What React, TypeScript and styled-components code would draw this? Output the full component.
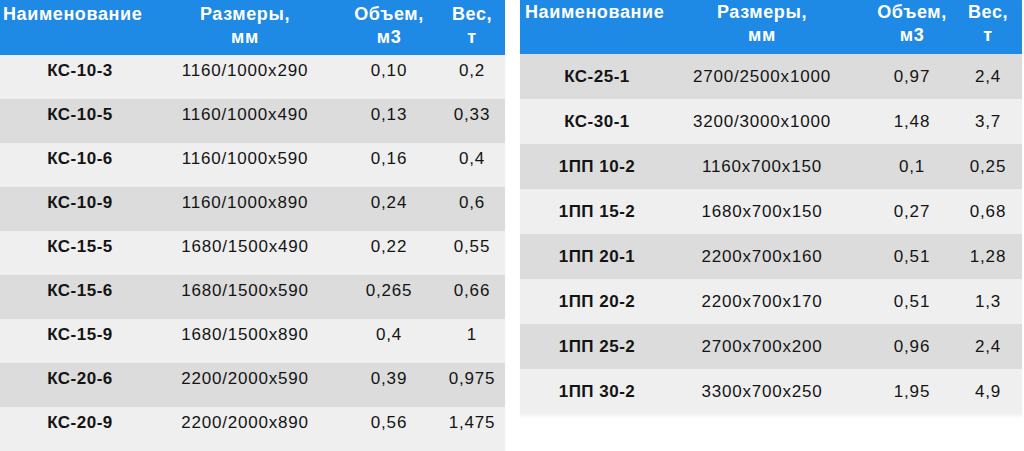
import * as React from 'react';
import styled, { createGlobalStyle } from 'styled-components';

const GlobalStyle = createGlobalStyle`
    html, body {
        margin: 0;
        padding: 0;
        background: #ffffff;
    }
    body {
        font-family: "Liberation Sans", Arial, sans-serif;
        color: #141414;
    }
`;

type Column = { width: number; shift: number };

type TableSpec = {
    width: number;
    headHeight: number;
    headTop: number;
    namePad: number;
    rowHeight: number;
    rowTop: number;
    firstDark: boolean;
    columns: Column[];
    rows: string[][];
};

const leftTable: TableSpec = {
    width: 505,
    headHeight: 55,
    headTop: 3,
    namePad: 3,
    rowHeight: 44,
    rowTop: 5,
    firstDark: false,
    columns: [
        { width: 160, shift: 0 },
        { width: 170, shift: 0 },
        { width: 118, shift: 0 },
        { width: 57, shift: -9 },
    ],
    rows: [
        ['КС-10-3', '1160/1000x290', '0,10', '0,2'],
        ['КС-10-5', '1160/1000x490', '0,13', '0,33'],
        ['КС-10-6', '1160/1000x590', '0,16', '0,4'],
        ['КС-10-9', '1160/1000x890', '0,24', '0,6'],
        ['КС-15-5', '1680/1500x490', '0,22', '0,55'],
        ['КС-15-6', '1680/1500x590', '0,265', '0,66'],
        ['КС-15-9', '1680/1500x890', '0,4', '1'],
        ['КС-20-6', '2200/2000x590', '0,39', '0,975'],
        ['КС-20-9', '2200/2000x890', '0,56', '1,475'],
    ],
};

const rightTable: TableSpec = {
    width: 502,
    headHeight: 54,
    headTop: 1,
    namePad: 5,
    rowHeight: 45,
    rowTop: 12,
    firstDark: true,
    columns: [
        { width: 154, shift: 0 },
        { width: 176, shift: 0 },
        { width: 100, shift: 24 },
        { width: 72, shift: 4 },
    ],
    rows: [
        ['КС-25-1', '2700/2500x1000', '0,97', '2,4'],
        ['КС-30-1', '3200/3000x1000', '1,48', '3,7'],
        ['1ПП 10-2', '1160x700x150', '0,1', '0,25'],
        ['1ПП 15-2', '1680x700x150', '0,27', '0,68'],
        ['1ПП 20-1', '2200x700x160', '0,51', '1,28'],
        ['1ПП 20-2', '2200x700x170', '0,51', '1,3'],
        ['1ПП 25-2', '2700x700x200', '0,96', '2,4'],
        ['1ПП 30-2', '3300x700x250', '1,95', '4,9'],
    ],
};

const headings: [string, string][] = [
    ['Наименование', ''],
    ['Размеры,', 'мм'],
    ['Объем,', 'м3'],
    ['Вес,', 'т'],
];

const Page = styled.div`
    display: flex;
    align-items: flex-start;
    gap: 15px;
    width: 1024px;
    height: 451px;
    overflow: hidden;
`;

const Table = styled.div<{ $width: number }>`
    display: flex;
    flex-direction: column;
    width: ${({ $width }) => $width}px;
    flex: none;
    box-shadow: 0 3px 2px rgba(0, 0, 0, 0.04);
`;

const HeadRow = styled.div<{ $cols: string; $height: number; $top: number }>`
    display: grid;
    grid-template-columns: ${({ $cols }) => $cols};
    align-items: start;
    height: ${({ $height }) => $height}px;
    box-sizing: border-box;
    padding-top: ${({ $top }) => $top}px;
    background: #1f89e6;
    color: #ffffff;
`;

const HeadCell = styled.div<{ $shift: number; $left?: boolean; $pad?: number }>`
    font-size: 18px;
    font-weight: bold;
    line-height: 23px;
    letter-spacing: 0.6px;
    text-align: ${({ $left }) => ($left ? 'left' : 'center')};
    padding-left: ${({ $shift, $left, $pad }) =>
        $left ? $pad ?? 0 : Math.max($shift, 0)}px;
    padding-right: ${({ $shift }) => Math.max(-$shift, 0)}px;
    white-space: nowrap;
`;

const Row = styled.div<{ $cols: string; $height: number; $top: number; $dark: boolean }>`
    display: grid;
    grid-template-columns: ${({ $cols }) => $cols};
    align-items: start;
    height: ${({ $height }) => $height}px;
    box-sizing: border-box;
    padding-top: ${({ $top }) => $top}px;
    background: ${({ $dark }) => ($dark ? '#dcdcdc' : '#efefef')};
`;

const Cell = styled.div<{ $shift: number; $bold?: boolean }>`
    font-size: 17px;
    line-height: 22px;
    font-weight: ${({ $bold }) => ($bold ? 'bold' : 'normal')};
    letter-spacing: ${({ $bold }) => ($bold ? '0.5px' : '0.8px')};
    text-align: center;
    padding-left: ${({ $shift }) => Math.max($shift, 0)}px;
    padding-right: ${({ $shift }) => Math.max(-$shift, 0)}px;
    white-space: nowrap;
`;

const SizeTable: React.FC<{ spec: TableSpec }> = ({ spec }) => {
    const cols = spec.columns.map((c) => `${c.width}px`).join(' ');
    return (
        <Table $width={spec.width}>
            <HeadRow $cols={cols} $height={spec.headHeight} $top={spec.headTop}>
                {headings.map(([first, second], i) => (
                    <HeadCell
                        key={first}
                        $shift={spec.columns[i].shift}
                        $left={i === 0}
                        $pad={spec.namePad}
                    >
                        {first}
                        {second && <br />}
                        {second}
                    </HeadCell>
                ))}
            </HeadRow>
            {spec.rows.map((row, r) => (
                <Row
                    key={row[0]}
                    $cols={cols}
                    $height={spec.rowHeight}
                    $top={spec.rowTop}
                    $dark={(r % 2 === 0) === spec.firstDark}
                >
                    {row.map((value, i) => (
                        <Cell key={i} $shift={spec.columns[i].shift} $bold={i === 0}>
                            {value}
                        </Cell>
                    ))}
                </Row>
            ))}
        </Table>
    );
};

export default function App() {
    return (
        <>
            <GlobalStyle />
            <Page>
                <SizeTable spec={leftTable} />
                <SizeTable spec={rightTable} />
            </Page>
        </>
    );
}
